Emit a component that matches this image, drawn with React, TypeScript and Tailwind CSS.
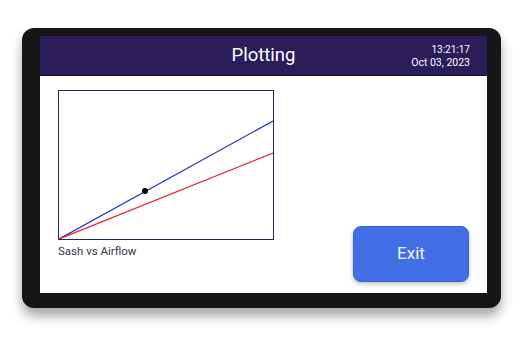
import React from "react";

export default function App() {
  return (
    <div
      className="w-[523px] h-[337px] bg-white pt-[28px] pl-[22px]"
      style={{ fontFamily: "Roboto, 'Liberation Sans', sans-serif" }}
    >
      <div className="w-[479px] h-[280px] bg-[#161616] rounded-[12px] pt-[8px] pl-[18px] pr-[14px] pb-[15px] shadow-[0_8px_12px_rgba(0,0,0,0.35)]">
        <div className="w-[447px] h-[257px] bg-white flex flex-col">
          <div className="h-[40px] bg-[#2a1d5a] border-b border-[#150e33] grid grid-cols-[1fr_auto_1fr] items-center">
            <div />
            <div className="text-white text-[18.5px] leading-none">Plotting</div>
            <div className="justify-self-end pr-[17px] flex flex-col items-end text-white">
              <div className="text-[10px] leading-[13px]">13:21:17</div>
              <div className="text-[10.5px] leading-[13px]">Oct 03, 2023</div>
            </div>
          </div>
          <div className="flex-1 flex justify-between pl-[18px] pr-[18px] pt-[14px] pb-[11px]">
            <div className="flex flex-col">
              <div className="w-[216px] h-[150px] border border-[#1e2a5e]">
                <svg width="214" height="148" viewBox="0 0 214 148" className="block">
                  <line x1="0" y1="148" x2="214" y2="30" stroke="#2233cc" strokeWidth="1.3" />
                  <line x1="0" y1="148" x2="214" y2="62" stroke="#ee2233" strokeWidth="1.3" />
                  <circle cx="86" cy="100" r="3" fill="#000" />
                </svg>
              </div>
              <div className="mt-[4px] text-[11.5px] leading-[15px] text-[#33334d]">Sash vs Airflow</div>
            </div>
            <div className="flex flex-col justify-end">
              <button className="w-[116px] h-[56px] rounded-[8px] bg-[#426ee6] border border-[#3563e0] text-[#f2f5ff] text-[17px] shadow-[0_2px_4px_rgba(0,0,0,0.25)]">
                Exit
              </button>
            </div>
          </div>
        </div>
      </div>
    </div>
  );
}
